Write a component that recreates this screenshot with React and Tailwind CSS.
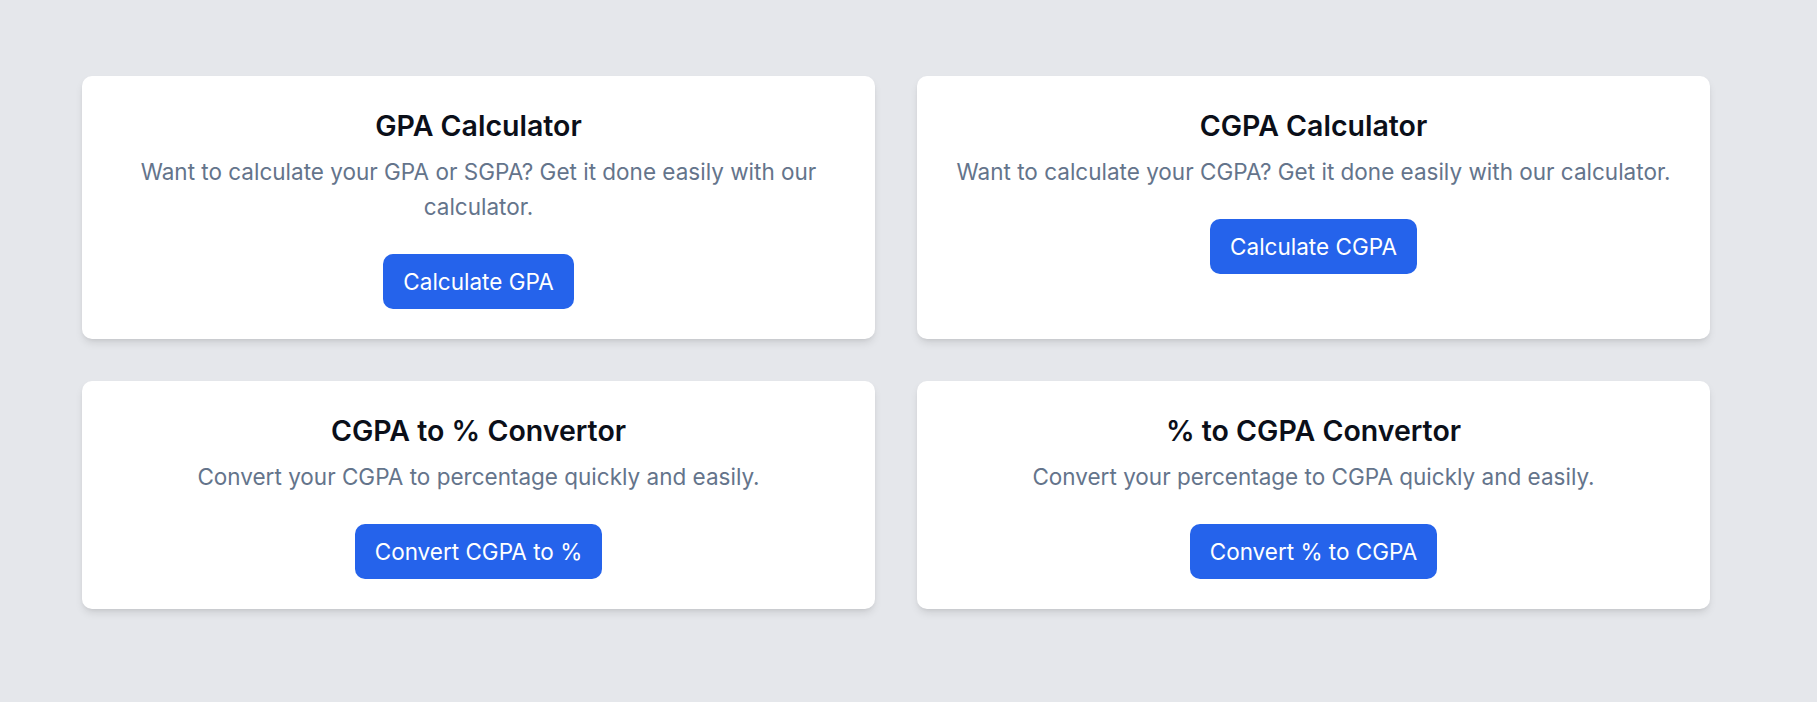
const tools = [
    {
        title: 'GPA Calculator',
        text: 'Want to calculate your GPA or SGPA? Get it done easily with our calculator.',
        action: 'Calculate GPA',
    },
    {
        title: 'CGPA Calculator',
        text: 'Want to calculate your CGPA? Get it done easily with our calculator.',
        action: 'Calculate CGPA',
    },
    {
        title: 'CGPA to % Convertor',
        text: 'Convert your CGPA to percentage quickly and easily.',
        action: 'Convert CGPA to %',
    },
    {
        title: '% to CGPA Convertor',
        text: 'Convert your percentage to CGPA quickly and easily.',
        action: 'Convert % to CGPA',
    },
];

function ToolCard({ title, text, action }) {
    return (
        <div className="rounded-[10px] bg-white p-[30px] text-center shadow-[0_5px_10px_-2px_rgba(0,0,0,0.12),0_2px_5px_-2px_rgba(0,0,0,0.08)]">
            <h2 className="text-[28.5px] font-semibold leading-[40px] text-[#0b0f19]">
                {title}
            </h2>
            <p className="mt-[8px] text-[22.5px] leading-[35px] text-[#64748b]">
                {text}
            </p>
            <button className="mt-[30px] rounded-[10px] bg-[#2563eb] px-[20px] py-[10px] text-[22.5px] leading-[35px] text-white">
                {action}
            </button>
        </div>
    );
}

export default function App() {
    return (
        <div className="min-h-screen bg-[#e5e7eb] font-['Inter',sans-serif]">
            <div className="grid w-[1710px] grid-cols-2 gap-x-[42px] gap-y-[42px] pl-[82px] pt-[76px]">
                {tools.map((tool) => (
                    <ToolCard key={tool.title} {...tool} />
                ))}
            </div>
        </div>
    );
}
